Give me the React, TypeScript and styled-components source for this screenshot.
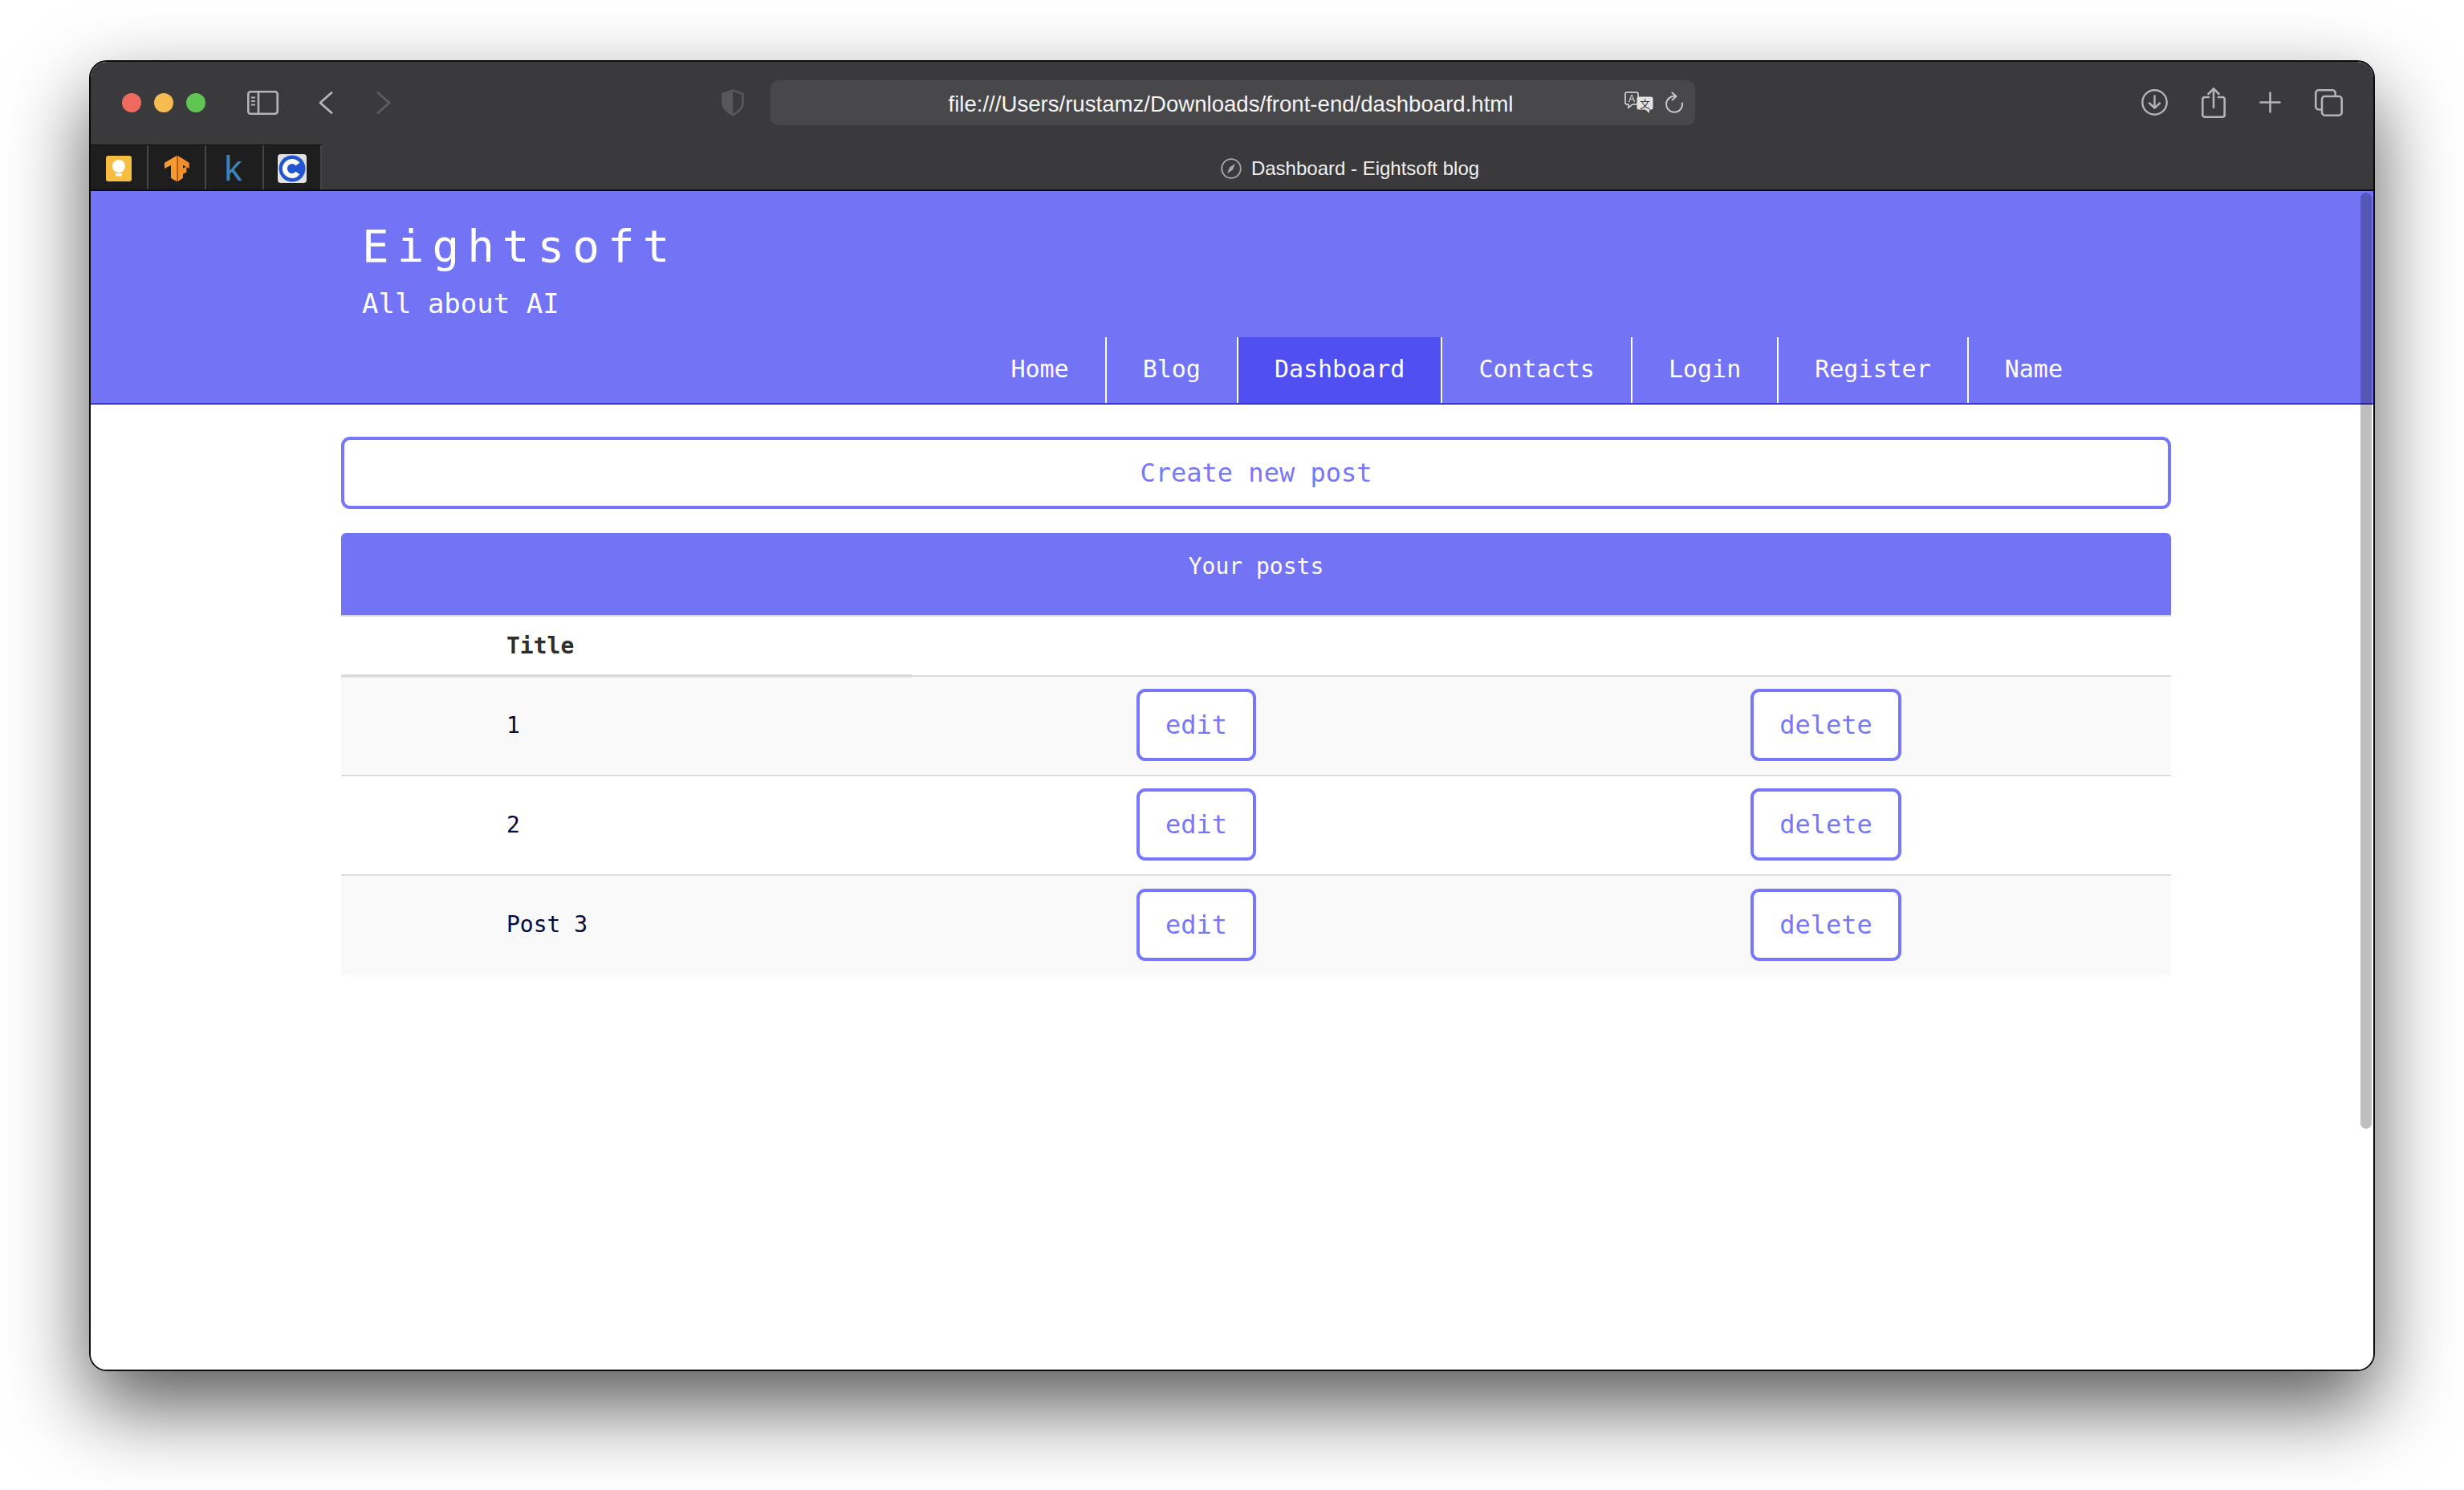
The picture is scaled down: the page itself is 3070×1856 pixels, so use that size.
import React from 'react';
import styled, { createGlobalStyle } from 'styled-components';

const GlobalStyle = createGlobalStyle`
  html, body {
    margin: 0;
    padding: 0;
    background: #fff;
  }
  body {
    width: 3070px;
    height: 1856px;
    overflow: hidden;
  }
`;

const NAV_ITEMS = ['Home', 'Blog', 'Dashboard', 'Contacts', 'Login', 'Register', 'Name'];
const POSTS = ['1', '2', 'Post 3'];

const LightBulbFavicon = () => (
  <svg width="32" height="32" viewBox="0 0 32 32">
    <rect width="32" height="32" rx="3" fill="#f6bd41" />
    <circle cx="16" cy="13" r="8" fill="#fff" />
    <rect x="12" y="14" width="8" height="6" fill="#fff" />
    <rect x="12" y="22" width="8" height="3.5" fill="#fff" opacity="0.85" />
  </svg>
);

const TensorFavicon = () => (
  <svg width="31" height="32" viewBox="0 0 31 32">
    <path d="M15 0 L0 8.7 V16 L8 11.7 V27.7 L15 32 Z" fill="#f8982f" />
    <path d="M16.7 0 L30.7 8.7 V16 L23 11.7 V15.4 L27.4 13.4 V20.4 L23 22.7 V27.7 L16.7 32 Z" fill="#f1902b" />
    <path d="M15 0 H16.7 V32 H15 Z" fill="#b96a22" />
  </svg>
);

const CFavicon = () => (
  <svg width="36" height="36" viewBox="0 0 36 36">
    <rect width="36" height="36" rx="4" fill="#e2e2e2" />
    <circle cx="18" cy="18" r="16.5" fill="#2156d0" />
    <path d="M25 12.5 A9 9 0 1 0 25 23.5" fill="none" stroke="#fff" strokeWidth="6" />
  </svg>
);

const SidebarIcon = () => (
  <svg width="39" height="30" viewBox="0 0 39 30" fill="none" stroke="#b4b4b6" strokeWidth="2.6">
    <rect x="1.3" y="1.3" width="36.4" height="27.4" rx="3" />
    <path d="M14 1.5 V28.5" />
    <path d="M5 8.5 H10 M5 13 H10 M5 17.5 H10" strokeWidth="2" />
  </svg>
);

const Chevron = ({ $dir, color }: { $dir: 'left' | 'right'; color: string }) => (
  <svg width="18" height="28" viewBox="0 0 18 28" fill="none" stroke={color} strokeWidth="2.8" strokeLinecap="round" strokeLinejoin="round">
    <path d={$dir === 'left' ? 'M16 1.5 L2 14 L16 26.5' : 'M2 1.5 L16 14 L2 26.5'} />
  </svg>
);

const ShieldIcon = () => (
  <svg width="28" height="33" viewBox="0 0 28 33">
    <path d="M14 1.5 L26.5 6 V17 C26.5 24 20 29 14 32 C8 29 1.5 24 1.5 17 V6 Z" fill="none" stroke="#58585a" strokeWidth="2.6" strokeLinejoin="round" />
    <path d="M14 1.5 L1.5 6 V17 C1.5 24 8 29 14 32 Z" fill="#58585a" />
  </svg>
);

const TranslateIcon = () => (
  <svg width="36" height="28" viewBox="0 0 36 28">
    <path d="M3 1 H15 a2 2 0 0 1 2 2 V14 a2 2 0 0 1 -2 2 H10 L5 20 V16 H3 a2 2 0 0 1 -2 -2 V3 a2 2 0 0 1 2 -2 Z" fill="none" stroke="#dedede" strokeWidth="1.6" />
    <text x="9" y="12.5" fontSize="12" textAnchor="middle" fontFamily="Liberation Sans, sans-serif" fill="#dedede">A</text>
    <path d="M18 6.5 H33 a2.5 2.5 0 0 1 2.5 2.5 V20 a2.5 2.5 0 0 1 -2.5 2.5 H31 V27 L26 22.5 H18 a2.5 2.5 0 0 1 -2.5 -2.5 V9 A2.5 2.5 0 0 1 18 6.5 Z" fill="#e4e4e4" />
    <text x="25.5" y="20" fontSize="13" textAnchor="middle" fontFamily="Noto Sans CJK SC, sans-serif" fill="#3a3a3c">文</text>
  </svg>
);

const ReloadIcon = () => (
  <svg width="22" height="27" viewBox="0 0 22 27" fill="none" stroke="#c8c8ca" strokeWidth="2" strokeLinecap="round" strokeLinejoin="round">
    <path d="M13 6 A10 10 0 1 0 21 14.5" />
    <path d="M8.5 1.5 L13.5 6 L8.5 10.5" />
  </svg>
);

const DownloadIcon = () => (
  <svg width="33" height="33" viewBox="0 0 33 33" fill="none" stroke="#b4b4b6" strokeWidth="2.4" strokeLinecap="round" strokeLinejoin="round">
    <circle cx="16.5" cy="16.5" r="15.2" />
    <path d="M16.5 8.5 V23.5 M10 17.5 L16.5 23.5 L23 17.5" />
  </svg>
);

const ShareIcon = () => (
  <svg width="30" height="38" viewBox="0 0 30 38" fill="none" stroke="#b4b4b6" strokeWidth="2.6" strokeLinecap="round" strokeLinejoin="round">
    <path d="M9 12 H4 a2.7 2.7 0 0 0 -2.7 2.7 V34 a2.7 2.7 0 0 0 2.7 2.7 H26 a2.7 2.7 0 0 0 2.7 -2.7 V14.7 A2.7 2.7 0 0 0 26 12 H21" />
    <path d="M15 25 V2 M8.5 8 L15 1.5 L21.5 8" />
  </svg>
);

const PlusIcon = () => (
  <svg width="27" height="27" viewBox="0 0 27 27" stroke="#b4b4b6" strokeWidth="2.6" strokeLinecap="round">
    <path d="M13.5 1.5 V25.5 M1.5 13.5 H25.5" />
  </svg>
);

const TabsIcon = () => (
  <svg width="35" height="34" viewBox="0 0 35 34" fill="none" stroke="#b4b4b6" strokeWidth="2.6" strokeLinejoin="round">
    <path d="M8.5 25.5 H5 a3.7 3.7 0 0 1 -3.7 -3.7 V5 A3.7 3.7 0 0 1 5 1.3 H22 A3.7 3.7 0 0 1 25.7 5 V8.5" />
    <rect x="9" y="9" width="24.7" height="23.7" rx="3.7" />
  </svg>
);

const CompassIcon = () => (
  <svg width="26" height="26" viewBox="0 0 26 26" fill="none">
    <circle cx="13" cy="13" r="11.8" stroke="#a8a8aa" strokeWidth="1.8" />
    <path d="M18 7 L14.8 14.8 L8 19 L11.2 11.2 Z" fill="#a8a8aa" />
  </svg>
);

export default function App() {
  return (
    <>
      <GlobalStyle />
      <Desktop>
        <Window>
          <Toolbar>
            <Lights>
              <Light $color="#ee6a5f" />
              <Light $color="#f5bd4f" />
              <Light $color="#61c554" />
            </Lights>
            <ToolIcon $left={52}>
              <SidebarIcon />
            </ToolIcon>
            <ToolIcon $left={50}>
              <Chevron $dir="left" color="#b4b4b6" />
            </ToolIcon>
            <ToolIcon $left={54}>
              <Chevron $dir="right" color="#5e5e60" />
            </ToolIcon>
            <ToolIcon $left={412}>
              <ShieldIcon />
            </ToolIcon>
            <UrlBar>
              <UrlText>file:///Users/rustamz/Downloads/front-end/dashboard.html</UrlText>
              <UrlActions>
                <TranslateIcon />
                <ReloadIcon />
              </UrlActions>
            </UrlBar>
            <ToolbarRight>
              <DownloadIcon />
              <ShareIcon />
              <PlusIcon />
              <TabsIcon />
            </ToolbarRight>
          </Toolbar>
          <TabStrip>
            <Favorites>
              <FavoriteTab>
                <LightBulbFavicon />
              </FavoriteTab>
              <FavoriteTab>
                <TensorFavicon />
              </FavoriteTab>
              <FavoriteTab>
                <KeyLetter>k</KeyLetter>
              </FavoriteTab>
              <FavoriteTab>
                <CFavicon />
              </FavoriteTab>
            </Favorites>
            <TabTitle>
              <CompassIcon />
              <span>Dashboard - Eightsoft blog</span>
            </TabTitle>
          </TabStrip>
          <Page>
            <Header>
              <Brand>
                <BrandName>Eightsoft</BrandName>
                <BrandTagline>All about AI</BrandTagline>
              </Brand>
              <Nav>
                {NAV_ITEMS.map((item) => (
                  <NavLink key={item} $active={item === 'Dashboard'}>
                    {item}
                  </NavLink>
                ))}
              </Nav>
            </Header>
            <Content>
              <CreateButton>Create new post</CreateButton>
              <PostsCard>
                <PostsHeading>Your posts</PostsHeading>
                <PostsTable>
                  <colgroup>
                    <col style={{ width: 711 }} />
                    <col style={{ width: 709 }} />
                    <col />
                  </colgroup>
                  <thead>
                    <tr>
                      <TitleCell>Title</TitleCell>
                      <BlankHeadCell />
                      <BlankHeadCell />
                    </tr>
                  </thead>
                  <tbody>
                    {POSTS.map((post, i) => (
                      <PostRow key={post} $striped={i % 2 === 0}>
                        <PostName>{post}</PostName>
                        <ActionCell>
                          <OutlineButton>edit</OutlineButton>
                        </ActionCell>
                        <ActionCell>
                          <OutlineButton>delete</OutlineButton>
                        </ActionCell>
                      </PostRow>
                    ))}
                  </tbody>
                </PostsTable>
              </PostsCard>
            </Content>
            <ScrollThumb />
          </Page>
        </Window>
      </Desktop>
    </>
  );
}

const mono = '"DejaVu Sans Mono", "Liberation Mono", monospace';
const accent = '#7373f5';
const outline = '#7777fa';

const Desktop = styled.div`
  box-sizing: border-box;
  width: 3070px;
  height: 1856px;
  padding: 75px 111px 0 111px;
  background: #fff;
`;

const Window = styled.div`
  box-sizing: border-box;
  width: 2848px;
  height: 1633px;
  border: 2px solid #0c0c0c;
  border-radius: 22px;
  background: #fff;
  overflow: hidden;
  display: flex;
  flex-direction: column;
  box-shadow: 0 44px 100px rgba(0, 0, 0, 0.65);
`;

const Toolbar = styled.div`
  flex: none;
  display: flex;
  align-items: center;
  height: 103px;
  padding-bottom: 2px;
  box-sizing: border-box;
  background: #3a3a3c;
`;

const Lights = styled.div`
  display: flex;
  gap: 16px;
  margin-left: 39px;
`;

const Light = styled.span<{ $color: string }>`
  width: 24px;
  height: 24px;
  border-radius: 50%;
  background: ${(p) => p.$color};
`;

const ToolIcon = styled.div<{ $left: number }>`
  display: flex;
  margin-left: ${(p) => p.$left}px;
`;

const UrlBar = styled.div`
  display: flex;
  align-items: center;
  justify-content: center;
  box-sizing: border-box;
  position: relative;
  width: 1152px;
  height: 56px;
  margin-left: 33px;
  background: #48484a;
  border-radius: 10px;
`;

const UrlText = styled.span`
  margin-top: 4px;
  margin-left: -5px;
  font: 400 27.6px 'Liberation Sans', Arial, sans-serif;
  color: #f4f4f4;
`;

const UrlActions = styled.div`
  position: absolute;
  top: 14px;
  right: 15px;
  display: flex;
  align-items: center;
  gap: 15px;
`;

const ToolbarRight = styled.div`
  display: flex;
  align-items: center;
  margin-left: auto;
  padding-right: 38px;
  gap: 42px;
`;

const TabStrip = styled.div`
  flex: none;
  display: flex;
  height: 58px;
  box-sizing: border-box;
  background: #3a3a3c;
  border-bottom: 2px solid #0c0c0c;
`;

const Favorites = styled.div`
  display: flex;
  border-top: 1px solid #0c0c0c;
  background: #1e1e1e;
`;

const FavoriteTab = styled.div`
  box-sizing: border-box;
  width: 72px;
  display: flex;
  align-items: center;
  justify-content: center;
  padding-top: 2px;
  border-right: 2px solid #454545;
`;

const KeyLetter = styled.span`
  margin-right: 3px;
  font: 400 44px 'Liberation Sans', Arial, sans-serif;
  line-height: 32px;
  color: #3a86bc;
`;

const TabTitle = styled.div`
  flex: 1;
  display: flex;
  align-items: center;
  justify-content: center;
  gap: 12px;
  margin-left: 6px;
  padding-top: 3px;
  font: 400 24px 'Liberation Sans', Arial, sans-serif;
  color: #f0f0f0;
`;

const Page = styled.div`
  position: relative;
  flex: 1;
  background: #fff;
  font-family: ${mono};
`;

const Header = styled.header`
  display: flex;
  flex-direction: column;
  background: ${accent};
  border-bottom: 2px solid #3a34e0;
`;

const Brand = styled.div`
  padding: 34px 0 21px 338px;
  color: #fff;
`;

const BrandName = styled.div`
  font-size: 56px;
  line-height: 70px;
  letter-spacing: 10px;
`;

const BrandTagline = styled.div`
  margin-top: 15px;
  font-size: 34px;
  line-height: 42px;
`;

const Nav = styled.nav`
  display: flex;
  justify-content: flex-end;
  padding-right: 342px;
`;

const NavLink = styled.a<{ $active?: boolean }>`
  padding: 0 45px;
  height: 82px;
  font-size: 30px;
  line-height: 80px;
  color: #fff;
  border-right: 2px solid #fff;
  background: ${(p) => (p.$active ? '#4f4ff2' : 'transparent')};

  &:last-child {
    border-right: none;
  }
`;

const Content = styled.main`
  width: 2280px;
  margin-left: 312px;
  padding-top: 40px;
`;

const CreateButton = styled.a`
  display: block;
  box-sizing: border-box;
  height: 90px;
  line-height: 82px;
  border: 4px solid ${outline};
  border-radius: 11px;
  background: #fff;
  color: ${outline};
  font-size: 32px;
  text-align: center;
`;

const PostsCard = styled.section`
  margin-top: 30px;
  border-radius: 6px;
  border-bottom: 3px solid #fcfcfc;
  overflow: hidden;
`;

const PostsHeading = styled.h2`
  margin: 0;
  padding: 21px 0 39px;
  background: ${accent};
  border-bottom: 2px solid #d5d5e0;
  color: #fff;
  font-size: 28px;
  font-weight: 400;
  line-height: 42px;
  text-align: center;
`;

const PostsTable = styled.table`
  width: 100%;
  table-layout: fixed;
  border-collapse: collapse;
  font-size: 28px;
`;

const TitleCell = styled.th`
  height: 72px;
  padding: 0 0 0 206px;
  text-align: left;
  font-weight: 700;
  color: #2e2e2e;
  border-bottom: 4px solid #dcdcdc;
`;

const BlankHeadCell = styled.th`
  padding: 0;
  border-bottom: 2px solid #dcdcdc;
`;

const PostRow = styled.tr<{ $striped: boolean }>`
  background: ${(p) => (p.$striped ? '#f9f9f9' : '#fff')};
  border-top: 2px solid #dcdcdc;
`;

const PostName = styled.td`
  box-sizing: border-box;
  height: 124px;
  padding: 0 0 2px 206px;
  color: #07073a;
`;

const ActionCell = styled.td`
  box-sizing: border-box;
  height: 124px;
  padding: 0 0 2px;
  text-align: center;
  vertical-align: middle;
`;

const OutlineButton = styled.a`
  display: inline-block;
  box-sizing: border-box;
  height: 90px;
  padding: 0 32px;
  line-height: 82px;
  vertical-align: middle;
  border: 4px solid ${outline};
  border-radius: 11px;
  background: #fff;
  color: ${outline};
  font-size: 32px;
`;

const ScrollThumb = styled.div`
  position: absolute;
  top: 2px;
  right: 2px;
  width: 14px;
  height: 1166px;
  border-radius: 7px;
  background: rgba(0, 0, 0, 0.25);
`;
